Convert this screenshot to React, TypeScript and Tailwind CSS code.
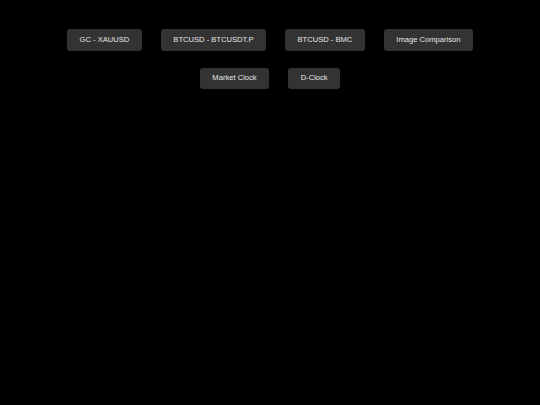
import React from 'react';

const rows = [
  ['GC - XAUUSD', 'BTCUSD - BTCUSDT.P', 'BTCUSD - BMC', 'Image Comparison'],
  ['Market Clock', 'D-Clock'],
];

const App = () => {
  return (
    <div
      className="min-h-[405px] w-full bg-black pt-[29px] flex flex-col items-center gap-[17px]"
      style={{ fontFamily: '"Liberation Sans", Arial, sans-serif' }}
    >
      {rows.map((row, i) => (
        <div key={i} className="flex justify-center gap-[19px]">
          {row.map((label) => (
            <button
              key={label}
              className="h-[21.5px] px-[12.5px] rounded-[3px] bg-[#333333] text-[#e6e6e6] text-[7.6px] leading-none whitespace-nowrap"
            >
              {label}
            </button>
          ))}
        </div>
      ))}
    </div>
  );
};

export default App;
